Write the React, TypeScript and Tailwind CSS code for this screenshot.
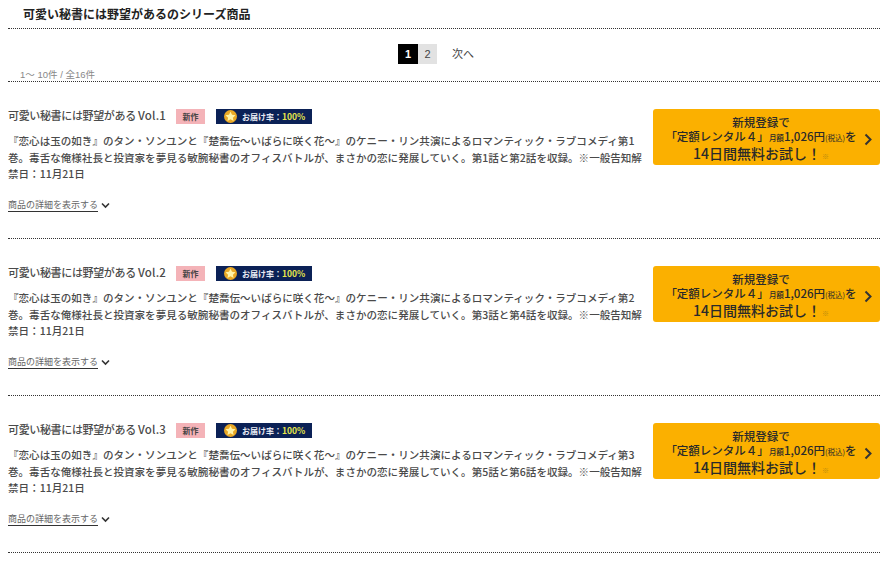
const font = { fontFamily: '"Liberation Sans", "Noto Sans CJK JP", sans-serif' }
const bodyFont = { fontFamily: '"Noto Sans CJK JP", "Noto Sans", sans-serif' }

const items = [
  { vol: 1, no: '1', from: '第1話と第2話' },
  { vol: 2, no: '2', from: '第3話と第4話' },
  { vol: 3, no: '3', from: '第5話と第6話' },
]

function StarBadge() {
  return (
    <span className="flex h-[15px] w-[96px] items-center bg-[#0b2156] pl-[8px]">
      <svg width="13" height="13" viewBox="0 0 24 24" className="shrink-0">
        <circle cx="12" cy="12" r="12" fill="#e9a825" />
        <path d="M12 3l2.8 5.9 6.4.8-4.7 4.4 1.2 6.4L12 17.3l-5.7 3.2 1.2-6.4-4.7-4.4 6.4-.8z" fill="#fff3a8" />
      </svg>
      <span className="ml-[5px] text-[8px] leading-none font-bold text-[#e6e9f2]">お届け率：</span>
      <span className="text-[8.5px] leading-none font-bold text-[#e8e84a]">100%</span>
    </span>
  )
}

function Item({ vol, no, from }: { vol: number; no: string; from: string }) {
  return (
    <div className="flex h-[157px] justify-between border-b border-dotted border-[#333] pt-[27px]">
      <div className="w-[637px]" style={bodyFont}>
        <div className="flex h-[15px] items-center">
          <h3 className="-mt-[2px] w-[157px] text-[11px] leading-none font-medium tracking-[-0.35px] whitespace-nowrap text-[#4a4a4a]">
            可愛い秘書には野望がある <span className="text-[11.5px] tracking-[0.2px]">Vol.{vol}</span>
          </h3>
          <span className="ml-[11px] flex h-[15px] w-[29px] items-center justify-center bg-[#f4b3b8] text-[8px] font-bold text-[#444]">新作</span>
          <span className="ml-[11px]"><StarBadge /></span>
        </div>
        <p className="mt-[9px] text-[10.55px] leading-[16.5px] font-medium whitespace-nowrap text-[#4a4a4a]">
          『恋心は玉の如き』のタン・ソンユンと『楚喬伝～いばらに咲く花～』のケニー・リン共演によるロマンティック・ラブコメディ第{no}
          <br />
          巻。毒舌な俺様社長と投資家を夢見る敏腕秘書のオフィスバトルが、まさかの恋に発展していく。{from}を収録。※一般告知解
          <br />
          禁日：11月21日
        </p>
        <div className="mt-[16px] flex items-center text-[9px] leading-[12px] text-[#666]">
          <span className="border-b border-[#333]">商品の詳細を表示する</span>
          <svg width="9" height="7" viewBox="0 0 9 7" className="ml-[3px]" fill="none" stroke="#333" strokeWidth="1.6">
            <path d="M1 1.5l3.5 3.5L8 1.5" />
          </svg>
        </div>
      </div>
      <div className="relative h-[56px] w-[227px] rounded-[3px] bg-[#fbb000] pr-[11px] text-center font-medium text-[#2a2a2a]" style={bodyFont}>
        <div className="pt-[6px] text-[11.5px] leading-[14px]">新規登録で</div>
        <div className="whitespace-nowrap text-[11.5px] leading-[14px]">
          「定額レンタル４」<span className="text-[7.5px]">月額</span>1,026円<span className="text-[7.5px] font-normal">(税込)</span>を
        </div>
        <div className="whitespace-nowrap text-[14px] leading-[17px]">
          14日間無料お試し！<span className="ml-[1px] text-[7px] font-normal text-[#b98a10]">※</span>
        </div>
        <svg width="9" height="13" viewBox="0 0 9 13" className="absolute top-[24px] right-[7px]" fill="none" stroke="#333" strokeWidth="2">
          <path d="M1.5 1.5l5 5-5 5" />
        </svg>
      </div>
    </div>
  )
}

export default function App() {
  return (
    <div className="h-[573px] w-[889px] overflow-hidden bg-white px-[8px] pr-[9px] text-[#333]" style={font}>
      <div className="h-[29px] border-b border-dotted border-[#333] pl-[15px] pt-[8px] text-[12px] leading-[15px] font-bold text-[#222]">
        可愛い秘書には野望があるのシリーズ商品
      </div>
      <div className="relative h-[53px] border-b border-dotted border-[#333]">
        <div className="flex pt-[15px] pl-[390px] text-[11px]">
          <span className="flex h-[20px] w-[20px] items-center justify-center bg-black font-bold text-white">1</span>
          <span className="flex h-[20px] w-[19px] items-center justify-center bg-[#e2e2e2] text-[#444]">2</span>
          <span className="ml-[15px] flex h-[20px] items-center text-[#444]">次へ</span>
        </div>
        <span className="absolute top-[40px] left-[12px] text-[9.5px] leading-[12px] text-[#888]">1～ 10件 / 全16件</span>
      </div>
      {items.map(item => (
        <Item key={item.vol} {...item} />
      ))}
    </div>
  )
}
